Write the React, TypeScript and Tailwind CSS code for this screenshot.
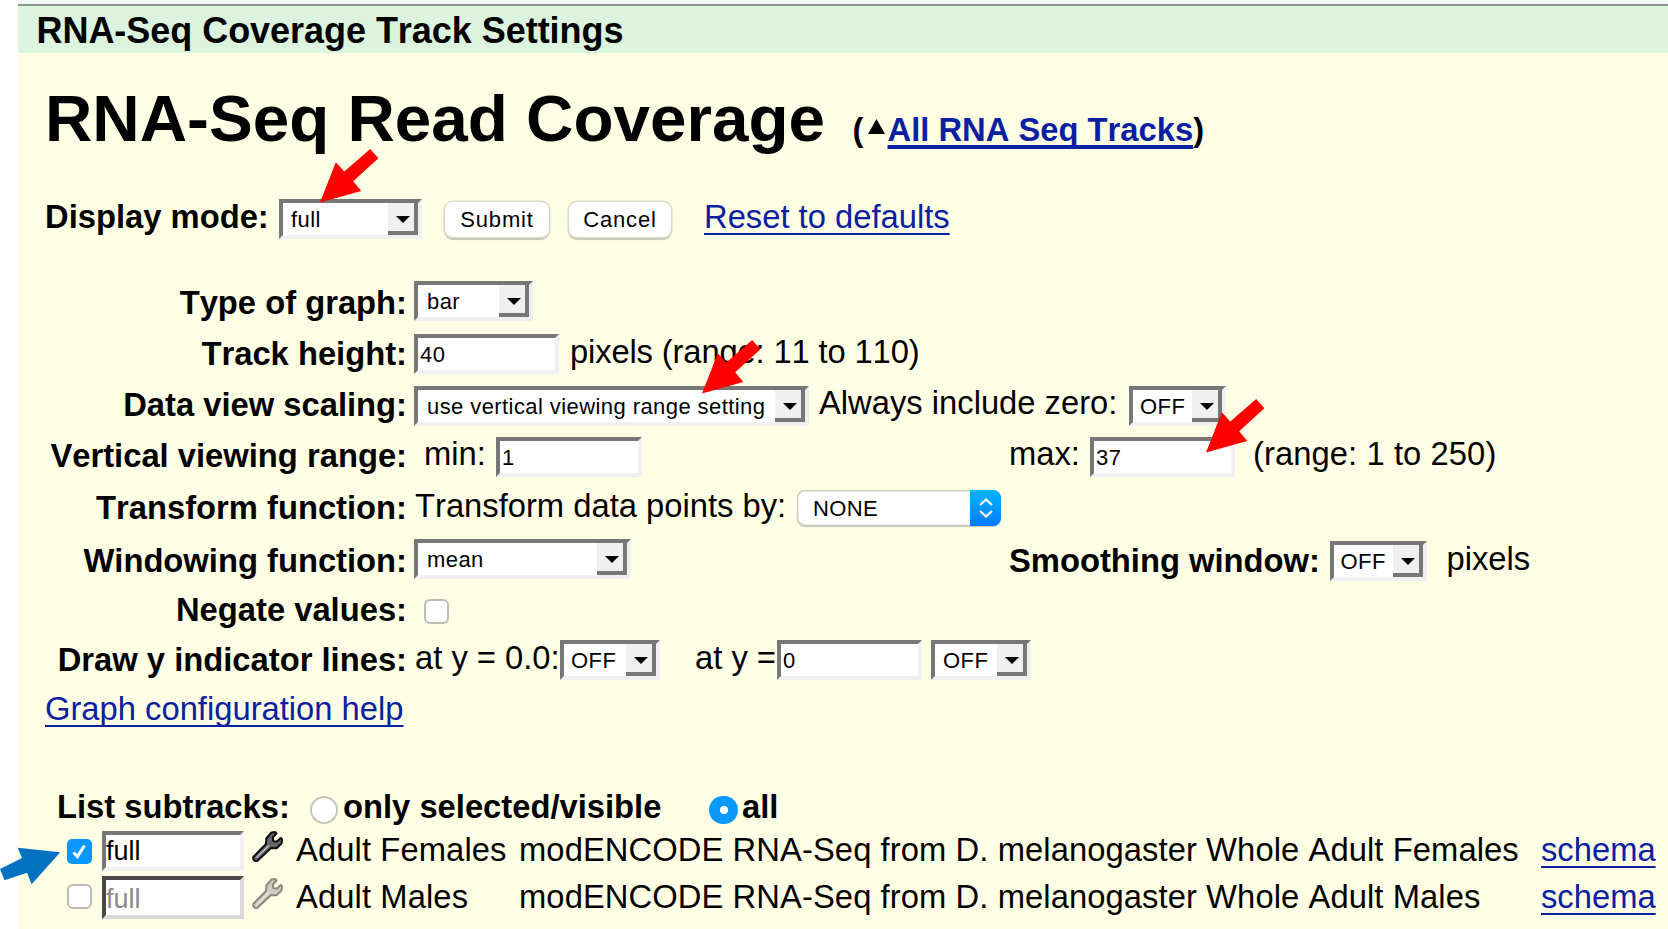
import type { ReactNode } from "react";

function Cell({ className = "", children }: { className?: string; children?: ReactNode }) {
  return <div className={`shrink-0 whitespace-nowrap leading-[40px] ${className}`}>{children}</div>;
}

function Label({ className = "", children }: { className?: string; children: ReactNode }) {
  return <Cell className={`w-[396px] pr-[7px] text-right font-bold ${className}`}>{children}</Cell>;
}

const bevel =
  "shrink-0 border-4 border-t-[#777] border-l-[#777] border-r-[#f0f0f0] border-b-[#f0f0f0] bg-white h-[40px] text-[22px] tracking-[0.42px] leading-[33px] whitespace-nowrap";

function Select({ className = "", children }: { className?: string; children: ReactNode }) {
  return (
    <div className={`${bevel} flex justify-between ${className}`}>
      <span>{children}</span>
      <span className="flex h-[32px] w-[30px] shrink-0 items-start justify-center border-r-4 border-b-4 border-[#777] bg-[#f0f0f0] pt-[13px] pl-[3px]">
        <svg width="14" height="7" viewBox="0 0 14 7">
          <path d="M0 0H14L7 7Z" fill="#000" />
        </svg>
      </span>
    </div>
  );
}

function Field({ className = "", children }: { className?: string; children: ReactNode }) {
  return <div className={`${bevel} pl-[2px] ${className}`}>{children}</div>;
}

function Button({ className = "", children }: { className?: string; children: ReactNode }) {
  return (
    <button
      className={`h-[35px] shrink-0 rounded-[8px] bg-white text-[22px] leading-[36px] tracking-[0.8px] shadow-[0_0_0_1.5px_#d9d8c6,0_2px_1px_1px_#c4c3b4] ${className}`}
    >
      {children}
    </button>
  );
}

function Checkbox({ checked = false, className = "" }: { checked?: boolean; className?: string }) {
  return checked ? (
    <div className={`flex h-[25px] w-[25px] shrink-0 items-center justify-center rounded-[5px] bg-[#0a98ff] ${className}`}>
      <svg width="17" height="17" viewBox="0 0 17 17">
        <path d="M2.5 9.5L6.5 13.5L13.5 2.5" fill="none" stroke="#fff" strokeWidth="3" />
      </svg>
    </div>
  ) : (
    <div className={`h-[25px] w-[25px] shrink-0 rounded-[6px] border-2 border-[#bcbcb4] bg-white ${className}`} />
  );
}

function Wrench({ muted = false }: { muted?: boolean }) {
  return (
    <svg className="shrink-0" width="31" height="31" viewBox="0 0 31 31">
      <path
        d="M1.3 26L14 13L14.3 7.5L19.5 1.5L23 1L24.5 2.5L20.8 6.5L21.3 10.2L25 10.5L28.8 7L30.2 8.3L29.5 12.5L24.5 17.3L19 17L5.5 29.8C3 31 0.5 28.5 1.3 26Z"
        fill={muted ? "#cfcebd" : "#66666a"}
        stroke={muted ? "#8b8a7e" : "#0c0c0e"}
        strokeWidth="2"
        strokeLinejoin="round"
      />
      <path d="M4.5 26.5L17 14.5" stroke={muted ? "#e8e7d6" : "#b9b9bd"} strokeWidth="1.6" />
    </svg>
  );
}

function RedArrow({ className }: { className: string }) {
  return (
    <svg className={`absolute ${className}`} width="59" height="54" viewBox="0 0 59 54">
      <path d="M0 53.6L15.8 13.3L24.3 22.6L50.2 0L58.4 9.3L33.2 32.3L41.3 42Z" fill="#f00" />
    </svg>
  );
}

const link = "text-[#0a20a0] underline decoration-2 underline-offset-[5px] [text-decoration-skip-ink:none]";

export default function App() {
  return (
    <div className="relative flex h-[929px] w-[1668px] flex-col overflow-hidden bg-white pl-[18px] font-['Liberation_Sans',Arial,sans-serif] text-[32.74px] text-black [font-kerning:none]">
      <div className="h-[4px] shrink-0 bg-[#eff9f3]" />
      <div className="h-[2px] shrink-0 bg-[#8e9490]" />
      <header className="h-[47px] shrink-0 bg-[#dcf4de] pl-[18.5px] text-[36px] leading-[49px] font-bold tracking-[-0.04px]">
        RNA-Seq Coverage Track Settings
      </header>

      <main className="flex h-[876px] shrink-0 flex-col bg-[#ffffe6]">
        <div className="flex h-[146px] shrink-0 items-baseline pt-[29px] pl-[27px] font-bold whitespace-nowrap">
          <h1 className="w-[807.5px] shrink-0 text-[65.6px] leading-[74px] font-bold">RNA-Seq Read Coverage</h1>
          <span className="w-[15px] shrink-0">(</span>
          <svg className="mr-[3px] mb-[8px] shrink-0" width="17" height="22" viewBox="0 0 17 22">
            <path d="M8.5 0L17 15H0Z" fill="#000" />
          </svg>
          <a className="text-[#0a20a0] underline decoration-4 underline-offset-[4px] [text-decoration-skip-ink:none]">
            All RNA Seq Tracks
          </a>
          <span>)</span>
        </div>

        <div className="flex h-[82px] shrink-0 items-start pl-[27px]">
          <Cell className="-mt-[2px] w-[234px] font-bold">Display mode:</Cell>
          <Select className="w-[143px] pl-[8px]">full</Select>
          <Button className="mt-[3px] ml-[23px] w-[104px]">Submit</Button>
          <Button className="mt-[3px] ml-[20px] w-[102px]">Cancel</Button>
          <Cell className="-mt-[2px] ml-[33px]">
            <a className={link}>Reset to defaults</a>
          </Cell>
        </div>

        <div className="flex h-[53px] shrink-0 items-start">
          <Label className="mt-[2px]">Type of graph:</Label>
          <Select className="w-[119px] pl-[9px]">bar</Select>
        </div>

        <div className="flex h-[52px] shrink-0 items-start">
          <Label>Track height:</Label>
          <Field className="w-[145px]">40</Field>
          <Cell className="-mt-[2px] ml-[11px] tracking-[-0.14px]">pixels (range: 11 to 110)</Cell>
        </div>

        <div className="flex h-[51px] shrink-0 items-start">
          <Label className="-mt-[1px]">Data view scaling:</Label>
          <Select className="w-[395px] pl-[9px]">use vertical viewing range setting</Select>
          <Cell className="-mt-[3px] ml-[10px] w-[310px]">Always include zero:</Cell>
          <Select className="w-[97px] pl-[7px]">OFF</Select>
        </div>

        <div className="flex h-[53px] shrink-0 items-start">
          <Label className="-mt-[1px]">Vertical viewing range:</Label>
          <Cell className="-mt-[3px] ml-[10px] w-[72px]">min:</Cell>
          <Field className="w-[146px]">1</Field>
          <Cell className="-mt-[3px] ml-[367px] w-[81px]">max:</Cell>
          <Field className="w-[145px]">37</Field>
          <Cell className="-mt-[3px] ml-[18px] tracking-[0.08px]">(range: 1 to 250)</Cell>
        </div>

        <div className="flex h-[49px] shrink-0 items-start">
          <Label className="-mt-[2px]">Transform function:</Label>
          <Cell className="-mt-[4px] ml-px w-[382px]">Transform data points by:</Cell>
          <div className="flex h-[36px] w-[204px] shrink-0 justify-between overflow-hidden rounded-[8px] bg-white text-[22px] leading-[38px] tracking-[0.4px] shadow-[inset_0_0_0_1.5px_#cfcebf,0_1px_1px_#c4c3b4]">
            <span className="pl-[16px]">NONE</span>
            <span className="flex w-[31px] items-center justify-center bg-gradient-to-b from-[#00b4ff] to-[#007aff]">
              <svg width="14" height="20" viewBox="0 0 14 20" fill="none" stroke="#fff" strokeWidth="2.2">
                <path d="M1 7L7 1.5L13 7M1 13L7 18.5L13 13" />
              </svg>
            </span>
          </div>
        </div>

        <div className="flex h-[52px] shrink-0 items-start">
          <Label className="mt-[2px]">Windowing function:</Label>
          <Select className="w-[217px] pl-[9px]">mean</Select>
          <Cell className="mt-[2px] ml-[378px] w-[320.5px] font-bold">Smoothing window:</Cell>
          <Select className="mt-[2px] w-[97.5px] pl-[7px]">OFF</Select>
          <Cell className="ml-[19.5px]">pixels</Cell>
        </div>

        <div className="flex h-[49px] shrink-0 items-start">
          <Label className="-mt-px">Negate values:</Label>
          <Checkbox className="mt-[8px] ml-[10px]" />
        </div>

        <div className="flex h-[50px] shrink-0 items-start">
          <Label>Draw y indicator lines:</Label>
          <Cell className="-mt-[2px] ml-px w-[145px]">at y = 0.0:</Cell>
          <Select className="w-[100px] pl-[7px]">OFF</Select>
          <Cell className="-mt-[2px] ml-[35px] w-[82px]">at y =</Cell>
          <Field className="w-[145px]">0</Field>
          <Select className="ml-[9px] w-[100px] pl-[8px]">OFF</Select>
        </div>

        <Cell className="-mt-[1px] h-[98px] pl-[27px]">
          <a className={link}>Graph configuration help</a>
        </Cell>

        <div className="flex h-[44px] shrink-0 items-start pl-[39px] font-bold">
          <Cell className="w-[253px]">List subtracks:</Cell>
          <div className="mt-[9px] h-[28px] w-[28px] shrink-0 rounded-full border-2 border-[#c6c5b8] bg-white" />
          <Cell className="ml-[5px] w-[366px]">only selected/visible</Cell>
          <div className="mt-[9px] flex h-[28px] w-[29px] shrink-0 items-center justify-center rounded-full bg-[#0a98ff]">
            <div className="h-[8px] w-[8px] rounded-full bg-white" />
          </div>
          <Cell className="ml-[4px]">all</Cell>
        </div>

        <div className="flex h-[45px] shrink-0 items-start pl-[49px]">
          <Checkbox checked className="mt-[8px]" />
          <Field className="ml-[10px] w-[142px] pl-0! text-[27px]! tracking-normal!">full</Field>
          <div className="w-[52px] shrink-0 pl-[8px]">
            <Wrench />
          </div>
          <Cell className="-mt-px w-[223px] tracking-[0.1px]">Adult Females</Cell>
          <Cell className="-mt-px w-[1022px] tracking-[0.08px]">
            modENCODE RNA-Seq from D. melanogaster Whole Adult Females
          </Cell>
          <Cell className="-mt-px">
            <a className={link}>schema</a>
          </Cell>
        </div>

        <div className="flex h-[45px] shrink-0 items-start pl-[49px]">
          <Checkbox className="mt-[8px]" />
          <Field className="ml-[10px] h-[43px]! w-[142px] border-t-[#484848]! border-r-[#dadada]! border-b-[#dadada]! border-l-[#484848]! pl-0! text-[27px]! leading-[38px]! tracking-normal! text-[#8a8a8a]">
            full
          </Field>
          <div className="w-[52px] shrink-0 pt-[2px] pl-[8px]">
            <Wrench muted />
          </div>
          <Cell className="mt-px w-[223px] tracking-[0.1px]">Adult Males</Cell>
          <Cell className="mt-px w-[1022px] tracking-[0.08px]">
            modENCODE RNA-Seq from D. melanogaster Whole Adult Males
          </Cell>
          <Cell className="mt-px">
            <a className={link}>schema</a>
          </Cell>
        </div>
      </main>

      <RedArrow className="top-[148.7px] left-[320px]" />
      <RedArrow className="top-[340.4px] left-[702px]" />
      <RedArrow className="top-[399.4px] left-[1205.6px]" />
      <svg className="absolute top-[847px] left-0" width="61" height="38" viewBox="0 0 61 38">
        <path d="M60.3 5.3L17.7 0.7L22 11L0 22L4.6 33.3L27 25.7L31.6 37.3Z" fill="#0070c0" />
      </svg>
    </div>
  );
}
